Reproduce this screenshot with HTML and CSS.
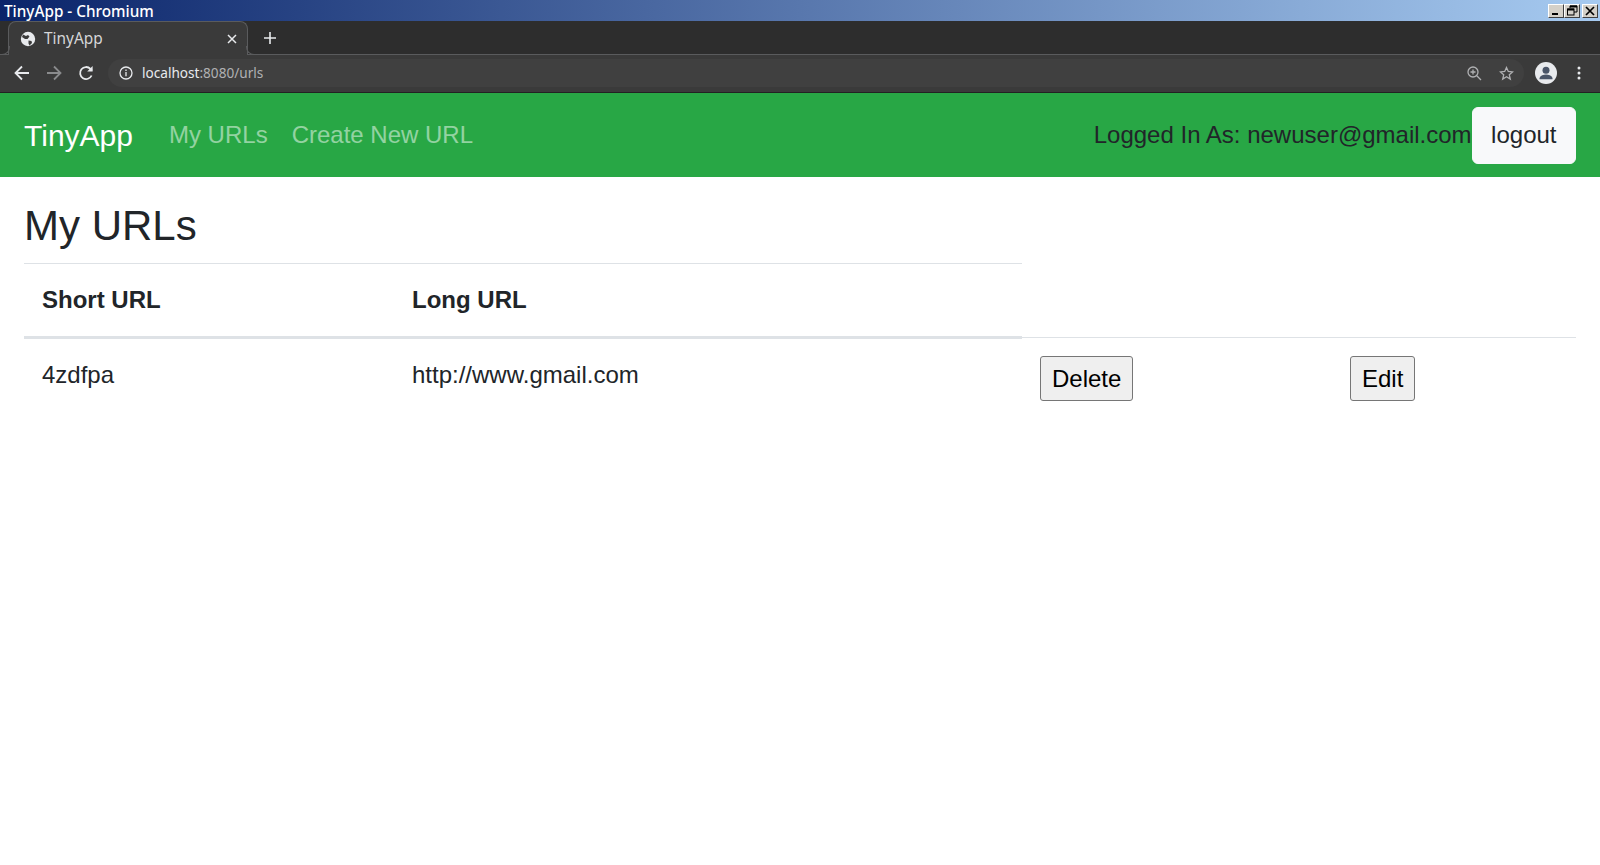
FILE: index.html
```html
<!DOCTYPE html>
<html lang="en">
<head>
    <meta charset="UTF-8">
    <title>TinyApp</title>
    <link rel="stylesheet" href="styles.css">
</head>
<body>

    <div class="titlebar">
        <span class="titlebar-text">TinyApp - Chromium</span>
        <div class="win-buttons">
            <div class="win-btn"><svg width="12" height="10" viewBox="0 0 12 10"><rect x="2" y="7" width="6" height="2" fill="#000"/></svg></div>
            <div class="win-btn"><svg width="12" height="11" viewBox="0 0 12 11" fill="none" stroke="#000"><path d="M4 3V1h7v6H8"/><path d="M4 1.500h7" stroke-width="2"/><rect x="1.500" y="4" width="6.500" height="6"/><path d="M1.500 4.500h6.500" stroke-width="2"/></svg></div>
            <div class="win-btn win-close"><svg width="12" height="10" viewBox="0 0 12 10" stroke="#000" stroke-width="1.700"><path d="M2 1l8 8M10 1l-8 8"/></svg></div>
        </div>
    </div>

    <div class="tabstrip">
        <div class="tab">
            <svg class="favicon" width="16" height="16" viewBox="0 0 16 16"><circle cx="8" cy="8" r="7.200" fill="#e8eaed"/><path d="M3 3.500l3 1.500 2-1 1.500 1.500-2 2.500H5L2 6zM8.500 9.500l3 .5.5 2-2.500 2.500-1-2z" fill="#3a3a3a"/></svg>
            <span class="tab-title">TinyApp</span>
            <svg width="10" height="10" viewBox="0 0 10 10" stroke="#e8eaed" stroke-width="1.500"><path d="M1 1l8 8M9 1l-8 8"/></svg>
        </div>
        <svg class="new-tab" width="12" height="12" viewBox="0 0 12 12" stroke="#e8eaed" stroke-width="1.600"><path d="M6 0v12M0 6h12"/></svg>
    </div>

    <div class="toolbar">
        <svg class="nav-icon" width="16" height="16" viewBox="0 0 16 16" fill="none" stroke="#e8eaed" stroke-width="1.800"><path d="M15 8H2M8 1.500L1.500 8 8 14.500"/></svg>
        <svg class="nav-icon" width="16" height="16" viewBox="0 0 16 16" fill="none" stroke="#8a8b8d" stroke-width="1.800"><path d="M1 8h13M8 1.500L14.500 8 8 14.500"/></svg>
        <svg class="nav-icon" width="16" height="16" viewBox="0 0 16 16" fill="none" stroke="#e8eaed" stroke-width="1.800"><path d="M13.600 10.500A6 6 0 1 1 12.400 3.800L14 5.500"/><path d="M14.600 1v5.400H9.200" fill="#e8eaed" stroke="none"/></svg>
        <div class="omnibox">
            <svg width="14" height="14" viewBox="0 0 14 14" fill="none" stroke="#e8eaed" stroke-width="1.300"><circle cx="7" cy="7" r="6"/><path d="M7 6v4.200M7 3.400v1.500"/></svg>
            <span class="url"><span class="url-host">localhost</span>:8080/urls</span>
            <svg width="15" height="15" viewBox="0 0 15 15" fill="none" stroke="#b0b1b3" stroke-width="1.300"><circle cx="6" cy="6" r="5"/><path d="M9.800 9.800L14 14M6 3.500v5M3.500 6h5"/></svg>
            <svg width="15" height="15" viewBox="0 0 15 15" fill="none" stroke="#b0b1b3" stroke-width="1.300"><path d="M7.500 1.500l1.800 4 4.300.4-3.300 2.900 1 4.300-3.800-2.300-3.800 2.300 1-4.300L1.400 5.900l4.300-.4z"/></svg>
        </div>
        <svg class="avatar" width="22" height="22" viewBox="0 0 22 22"><circle cx="11" cy="11" r="11" fill="#e8eaed"/><circle cx="11" cy="8.200" r="3.500" fill="#4a5568"/><path d="M4.500 16c1-2.800 4-3.600 6.500-3.600s5.500.8 6.500 3.600v1.200h-13z" fill="#4a5568"/></svg>
        <svg class="menu-dots" width="4" height="14" viewBox="0 0 4 14" fill="#e8eaed"><circle cx="2" cy="2" r="1.500"/><circle cx="2" cy="7" r="1.500"/><circle cx="2" cy="12" r="1.500"/></svg>
    </div>

    <nav class="navbar">
        <a class="brand" href="#">TinyApp</a>
        <a class="nav-link" href="#">My URLs</a>
        <a class="nav-link" href="#">Create New URL</a>
        <div class="nav-right">
            <span class="logged-in">Logged In As: newuser@gmail.com</span>
            <button class="logout">logout</button>
        </div>
    </nav>

    <main class="content">
        <h3 class="page-title">My URLs</h3>
        <table class="urls">
            <colgroup>
                <col class="col-short">
                <col class="col-long">
                <col class="col-delete">
                <col class="col-edit">
            </colgroup>
            <thead>
                <tr>
                    <th>Short URL</th>
                    <th>Long URL</th>
                </tr>
            </thead>
            <tbody>
                <tr>
                    <td>4zdfpa</td>
                    <td>http://www.gmail.com</td>
                    <td><button class="row-btn">Delete</button></td>
                    <td><button class="row-btn">Edit</button></td>
                </tr>
            </tbody>
        </table>
    </main>

</body>
</html>
```

FILE: styles.css
```css
* {
    box-sizing: border-box;
}

body {
    margin: 0;
    height: 865px;
    overflow: hidden;
    background: white;
    color: #212529;
    font-family: "Liberation Sans", Arial, sans-serif;
    font-size: 24px;
    line-height: 1.5;
}

/* window + browser frame */
.titlebar {
    height: 21px;
    display: flex;
    align-items: center;
    justify-content: space-between;
    padding: 0 2px 0 4px;
    background: linear-gradient(to right, #0a246a, #a6caf0);
    color: white;
    font-family: "Noto Sans", sans-serif;
    font-size: 15.3px;
    font-weight: 500;
    line-height: 21px;
}

.titlebar-text {
    padding-top: 2px;
}

.win-buttons {
    display: flex;
}

.win-btn {
    width: 16px;
    height: 14px;
    display: flex;
    align-items: center;
    justify-content: center;
    background: #d4d0c8;
    border: 1px solid;
    border-color: #fff #404040 #404040 #fff;
}

.win-close {
    margin-left: 2px;
}

.tabstrip {
    height: 34px;
    display: flex;
    align-items: flex-start;
    padding-left: 8px;
    background: #2d2d2d;
    border-bottom: 1px solid #5a5b5d;
}

.tab {
    position: relative;
    width: 240px;
    height: 34px;
    display: flex;
    align-items: center;
    padding: 0 10px 0 11px;
    background: #3a3a3a;
    border: 1px solid #5a5b5d;
    border-bottom: none;
    border-radius: 8px 8px 0 0;
    color: #d5d6d8;
    font-family: "Noto Sans", sans-serif;
    font-size: 15.4px;
}

/* little flares at the foot of the tab */
.tab::before,
.tab::after {
    content: "";
    position: absolute;
    bottom: 0;
    width: 8px;
    height: 8px;
    border-bottom: 1px solid #5a5b5d;
}

.tab::before {
    left: -8px;
    border-right: 1px solid #5a5b5d;
    border-radius: 0 0 8px 0;
}

.tab::after {
    right: -8px;
    border-left: 1px solid #5a5b5d;
    border-radius: 0 0 0 8px;
}

.tab-title {
    flex: 1;
    margin-left: 8px;
}

.new-tab {
    margin: 11px 0 0 16px;
}

.toolbar {
    height: 38px;
    display: flex;
    align-items: center;
    gap: 16px;
    padding: 0 0 1px 14px;
    background: #3a3a3a;
    border-bottom: 1px solid #222;
}

.omnibox {
    width: 1416px;
    height: 28px;
    display: flex;
    align-items: center;
    gap: 17px;
    margin-left: -2px;
    padding: 0 10px 0 11px;
    background: #404040;
    border-radius: 14px;
    color: #b0b1b3;
    font-family: "Noto Sans", sans-serif;
    font-size: 13.6px;
}

.url {
    flex: 1;
    margin-left: -8px;
}

.url-host {
    color: #e8eaed;
}

.avatar {
    margin-left: -5px;
}

.menu-dots {
    margin-left: 4px;
}

/* navbar */
.navbar {
    height: 84px;
    display: flex;
    align-items: center;
    padding: 12px 24px;
    background: #28a745;
}

.brand {
    margin-right: 24px;
    padding: 7.5px 0;
    color: white;
    font-size: 30px;
    line-height: 45px;
    text-decoration: none;
}

.nav-link {
    padding: 12px;
    color: rgba(255, 255, 255, 0.5);
    text-decoration: none;
}

.nav-right {
    display: flex;
    align-items: center;
    margin-left: auto;
}

.logout {
    height: 57px;
    padding: 9px 18.5px;
    background: #f8f9fa;
    border: 1px solid #f8f9fa;
    border-radius: 6px;
    color: #212529;
    font-family: inherit;
    font-size: 24px;
    line-height: 36px;
}

/* page */
.content {
    padding: 24px;
}

.page-title {
    margin: 0 0 12px;
    font-size: 42px;
    font-weight: 500;
    line-height: 1.2;
}

.urls {
    width: 100%;
    table-layout: fixed;
    border-collapse: collapse;
}

.col-short { width: 370px; }
.col-long { width: 628px; }
.col-delete { width: 310px; }

.urls th,
.urls td {
    padding: 18px;
    text-align: left;
    vertical-align: top;
}

.urls th {
    border-top: 1px solid #dee2e6;
    border-bottom: 3px solid #dee2e6;
    font-weight: 700;
}

.urls td {
    border-top: 1px solid #dee2e6;
}

.row-btn {
    padding: 7.5px 11px;
    background: #efefef;
    border: 1px solid #767676;
    border-radius: 3px;
    color: black;
    font-family: inherit;
    font-size: 24px;
    line-height: 28px;
}
```
